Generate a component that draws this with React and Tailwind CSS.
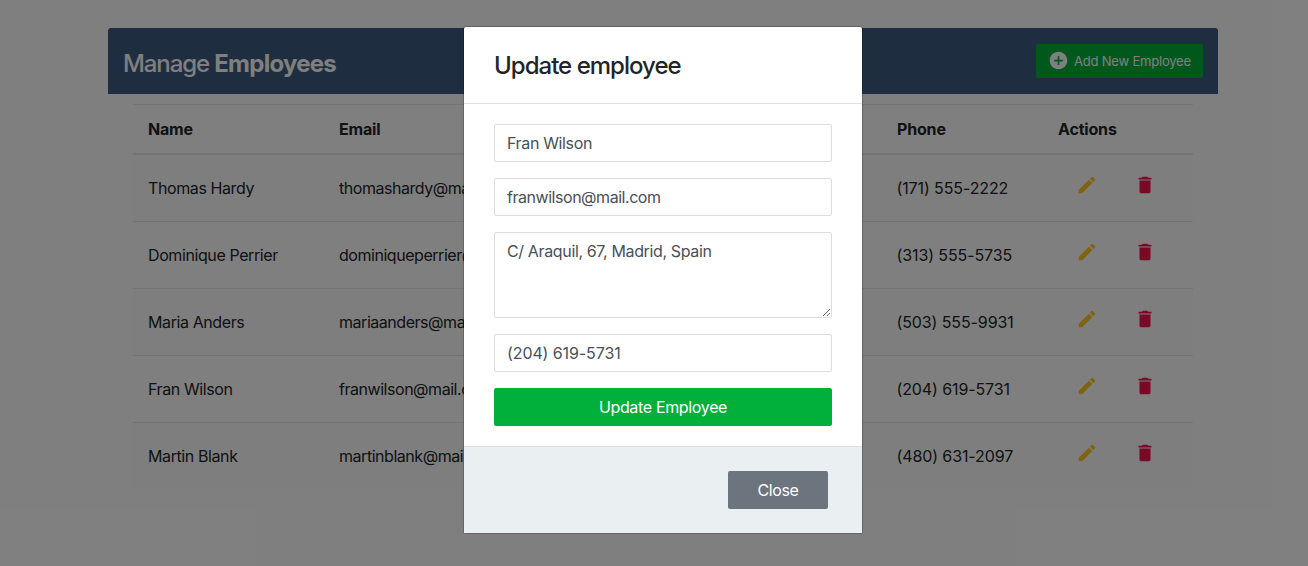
import { MdAddCircle, MdDelete, MdEdit } from "react-icons/md";

const employees = [
  { name: "Thomas Hardy", email: "thomashardy@mail.com", phone: "(171) 555-2222" },
  { name: "Dominique Perrier", email: "dominiqueperrier@mail.com", phone: "(313) 555-5735" },
  { name: "Maria Anders", email: "mariaanders@mail.com", phone: "(503) 555-9931" },
  { name: "Fran Wilson", email: "franwilson@mail.com", phone: "(204) 619-5731" },
  { name: "Martin Blank", email: "martinblank@mail.com", phone: "(480) 631-2097" },
];

const columns = "grid grid-cols-[191px_558px_161px_150px]";
const field =
  "block w-full rounded-[2px] border border-[#dddddd] bg-white px-3 py-1.5 text-base text-[#495057] outline-none";

function EmployeeTable() {
  return (
    <div className="px-[25px] pt-2.5">
      <div
        className={`${columns} h-[51px] items-center border-t border-b-2 border-[#e9e9e9] font-bold tracking-[-0.18px]`}
      >
        <span className="pl-[15px]">Name</span>
        <span className="pl-[15px]">Email</span>
        <span className="pl-[15px]">Phone</span>
        <span className="pl-[15px]">Actions</span>
      </div>
      {employees.map((e) => (
        <div
          key={e.email}
          className={`${columns} h-[67px] items-center border-t border-[#e9e9e9] odd:bg-white even:bg-[#fcfcfc] nth-2:h-[66px] nth-2:border-t-0`}
        >
          <span className="pl-[15px] tracking-[-0.4px]">{e.name}</span>
          <span className="pl-[15px] tracking-[-0.46px]">{e.email}</span>
          <span className="pl-[14.5px] tracking-[-0.11px]">{e.phone}</span>
          <span className="flex gap-9 pb-1.5 pl-[33px]">
            <MdEdit className="size-[22px] text-[#ffc720]" />
            <MdDelete className="size-[22px] text-[#f31349]" />
          </span>
        </div>
      ))}
    </div>
  );
}

function UpdateDialog() {
  return (
    <div className="w-[400px] rounded-[3px] border border-black/20 bg-white bg-clip-padding">
      <div className="flex h-[77px] items-center border-b border-[#dee2e6] px-[30px] pt-px">
        <h4 className="text-2xl font-medium tracking-[-0.98px]">Update employee</h4>
      </div>
      <form className="flex flex-col gap-4 px-[30px] py-5">
        <input className={`${field} tracking-[-0.36px]`} defaultValue="Fran Wilson" />
        <input className={`${field} tracking-[-0.46px]`} defaultValue="franwilson@mail.com" />
        <textarea
          className={`${field} h-[86px] resize tracking-[-0.36px]`}
          defaultValue="C/ Araquil, 67, Madrid, Spain"
        />
        <input className={`${field} tracking-[-0.1px]`} defaultValue="(204) 619-5731" />
        <button type="button" className="h-[38px] w-full rounded-[2px] bg-[#00b03b] tracking-[-0.34px] text-white">
          Update Employee
        </button>
      </form>
      <div className="flex h-[87px] items-center justify-end border-t border-[#dee2e6] bg-[#eaeff2] pr-[34px]">
        <button type="button" className="h-[38px] w-[100px] rounded-[2px] bg-[#6c757d] tracking-[-0.36px] text-white">
          Close
        </button>
      </div>
    </div>
  );
}

export default function App() {
  return (
    <div className="relative h-[566px] overflow-hidden bg-white font-[Inter,sans-serif] text-base text-[#212529]">
      <div className="ml-[108px] w-[1110px] pt-7">
        <div className="flex h-[66px] items-start justify-between rounded-t-[3px] bg-[#3f5b80] px-[15px] text-white">
          <h2 className="pt-5 text-2xl font-medium tracking-[-1.1px]">
            Manage <b className="font-bold tracking-[-0.75px]">Employees</b>
          </h2>
          <button
            type="button"
            className="mt-4 flex h-[34px] w-[167px] items-center rounded-[2px] bg-[#00b03b] pl-3 text-[13px] tracking-[-0.2px]"
          >
            <MdAddCircle className="mr-[5px] mb-px size-[21px]" />
            <span className="pt-0.5">Add New Employee</span>
          </button>
        </div>
        <EmployeeTable />
      </div>
      <div className="absolute inset-0 flex items-start bg-black/50 pt-[26px] pl-[463px]">
        <UpdateDialog />
      </div>
    </div>
  );
}
